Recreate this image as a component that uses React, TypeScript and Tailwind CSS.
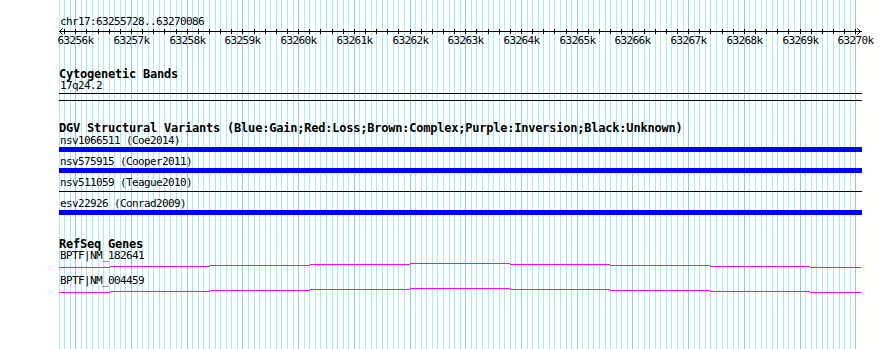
const MAJOR0 = 75.3;
const KB = 55.714;
const OX = 56; // left edge of the ruler drawing

const variants = [
  { label: 'nsv1066511 (Coe2014)', kind: 'gain' },
  { label: 'nsv575915 (Cooper2011)', kind: 'gain' },
  { label: 'nsv511059 (Teague2010)', kind: 'unknown' },
  { label: 'esv22926 (Conrad2009)', kind: 'gain' },
];

const genes = ['BPTF|NM_182641', 'BPTF|NM_004459'];

// little steps the gene line takes across the window
const segments = [
  { x: 0, w: 51, y: 5 },
  { x: 51, w: 100, y: 4 },
  { x: 151, w: 100, y: 3 },
  { x: 251, w: 100, y: 2 },
  { x: 351, w: 100, y: 1 },
  { x: 451, w: 100, y: 2 },
  { x: 551, w: 100, y: 3 },
  { x: 651, w: 100, y: 4 },
  { x: 751, w: 51, y: 5 },
];

function Grid() {
  const lines = [];
  for (let k = -3; k <= 140; k++) {
    const x = Math.round(MAJOR0 + (k * KB) / 10);
    lines.push(
      <rect key={k} x={x} y={0} width={1} height={349} fill={k % 10 === 0 ? '#8ec8ec' : '#aaecee'} />
    );
  }
  return (
    <svg className="absolute inset-0" width={890} height={349} shapeRendering="crispEdges">
      {lines}
    </svg>
  );
}

function Ruler() {
  const ticks = [];
  for (let k = -1; k <= 70; k++) {
    const x = Math.round(MAJOR0 + (k * KB) / 5) - OX;
    ticks.push(<rect key={k} x={x} y={1} width={1} height={5} fill="#000" />);
  }
  const labels = [];
  for (let n = 0; n <= 14; n++) {
    const x = Math.round(MAJOR0 + n * KB) - OX + 0.5;
    labels.push(
      <text key={n} x={x} y={16} textAnchor="middle" fontSize={11} letterSpacing={-0.62} fill="#000"
        fontFamily="'DejaVu Sans Mono', monospace">
        {63256 + n}k
      </text>
    );
  }
  const a = 59 - OX;
  const b = 861 - OX;
  return (
    <svg className="block -ml-[3px]" width={834} height={20}>
      <g shapeRendering="crispEdges">
        <rect x={a} y={3} width={803} height={1} fill="#000" />
        {ticks}
      </g>
      <path
        d={`M${a + 3.5} 0.5 L${a + 0.5} 3.5 L${a + 3.5} 6.5 M${b - 3.5} 0.5 L${b - 0.5} 3.5 L${b - 3.5} 6.5`}
        stroke="#000" strokeWidth={1} fill="none"
      />
      {labels}
    </svg>
  );
}

function Label({ children }: { children: React.ReactNode }) {
  return <div className="h-[12px] pl-px text-[11px] leading-[12px] tracking-[-0.62px] whitespace-nowrap text-black">{children}</div>;
}

function Title({ children }: { children: React.ReactNode }) {
  return <div className="h-[12px] text-[12px] leading-[12px] font-bold tracking-[-0.22px] whitespace-nowrap text-black">{children}</div>;
}

export default function App() {
  return (
    <div className="relative w-[890px] h-[349px] bg-white overflow-hidden font-['DejaVu_Sans_Mono',monospace]">
      <Grid />
      <div className="relative flex flex-col pl-[59px] pt-[16px]">
        <Label>chr17:63255728..63270086</Label>
        <Ruler />

        <div className="mt-[20px]">
          <Title>Cytogenetic Bands</Title>
          <Label>17q24.2</Label>
          <div className="mt-px h-px w-[803px] bg-black" />
          <div className="mt-[6px] h-px w-[803px] bg-black" />
        </div>

        <div className="mt-[21px]">
          <Title>DGV Structural Variants (Blue:Gain;Red:Loss;Brown:Complex;Purple:Inversion;Black:Unknown)</Title>
          <div className="mt-px flex flex-col">
            {variants.map((v) => (
              <div key={v.label} className="h-[21px]">
                <Label>{v.label}</Label>
                {v.kind === 'gain' ? (
                  <div className="h-[5px] w-[803px] bg-[#0000ff]" />
                ) : (
                  <div className="h-[5px] w-[803px] pt-[2px]">
                    <div className="h-px bg-black" />
                  </div>
                )}
              </div>
            ))}
          </div>
        </div>

        <div className="mt-[19px]">
          <Title>RefSeq Genes</Title>
          {genes.map((g) => (
            <div key={g} className="h-[25px]">
              <Label>{g}</Label>
              <svg className="block" width={803} height={13} shapeRendering="crispEdges">
                {segments.map((s) => (
                  <rect key={s.x} x={s.x} y={s.y} width={s.w} height={1} fill="#ff00ff" />
                ))}
              </svg>
            </div>
          ))}
        </div>
      </div>
    </div>
  );
}
